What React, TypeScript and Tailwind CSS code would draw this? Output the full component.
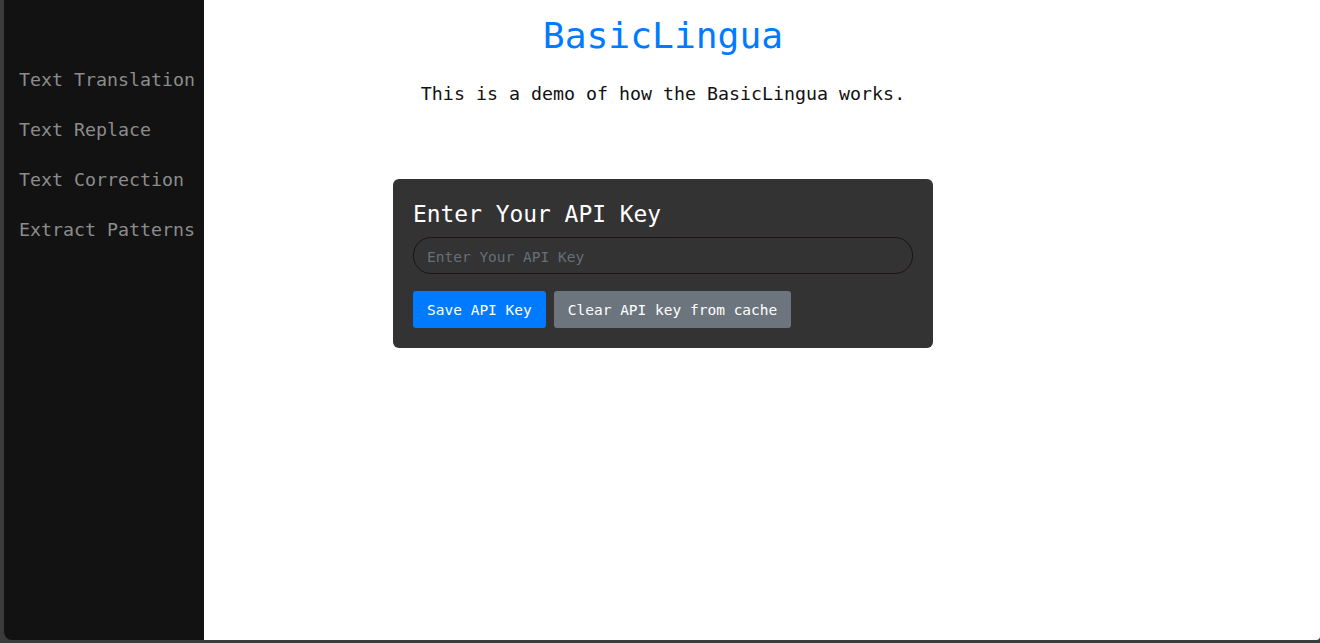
const mono = "font-['DejaVu_Sans_Mono','Liberation_Mono',monospace]";

const links = ["Text Translation", "Text Replace", "Text Correction", "Extract Patterns"];

export default function App() {
  return (
    <div className={`h-[643px] w-[1320px] bg-[#3b3b3b] pb-[3px] pl-[4px] ${mono}`}>
      <div className="flex h-full overflow-hidden rounded-bl-lg rounded-br-sm">
        <nav className="flex w-[200px] shrink-0 flex-col gap-[26px] bg-[#121212] pl-[15px] pt-[68px]">
          {links.map((l) => (
            <a key={l} className="text-[18.3px] leading-[24px] whitespace-nowrap text-[#8c8c8c]">
              {l}
            </a>
          ))}
        </nav>
        <main className="flex flex-1 flex-col items-center bg-white pr-[198px]">
          <h1 className="mt-[14px] text-[36.3px] leading-[44px] text-[#007bff]">BasicLingua</h1>
          <p className="mt-[24px] text-[18.3px] leading-[24px] text-[#111]">
            This is a demo of how the BasicLingua works.
          </p>
          <section className="mt-[73px] flex w-[540px] flex-col rounded-md bg-[#333333] px-5 pb-5 pt-5">
            <h2 className="text-[22.9px] leading-[30px] text-white">Enter Your API Key</h2>
            <input
              placeholder="Enter Your API Key"
              className="mt-2 h-[37px] w-[500px] rounded-[18px] border border-[#1f1212] bg-[#333333] px-[13px] pt-[2px] text-[14.5px] text-white outline-none placeholder:text-[#66707a]"
            />
            <div className="mt-[17px] flex gap-2">
              <button className="h-[37px] rounded-[3px] bg-[#007bff] px-[14px] pt-[2px] text-[14.5px] text-white">
                Save API Key
              </button>
              <button className="h-[37px] rounded-[3px] bg-[#6c757d] px-[14px] pt-[2px] text-[14.5px] text-white">
                Clear API key from cache
              </button>
            </div>
          </section>
        </main>
      </div>
    </div>
  );
}
